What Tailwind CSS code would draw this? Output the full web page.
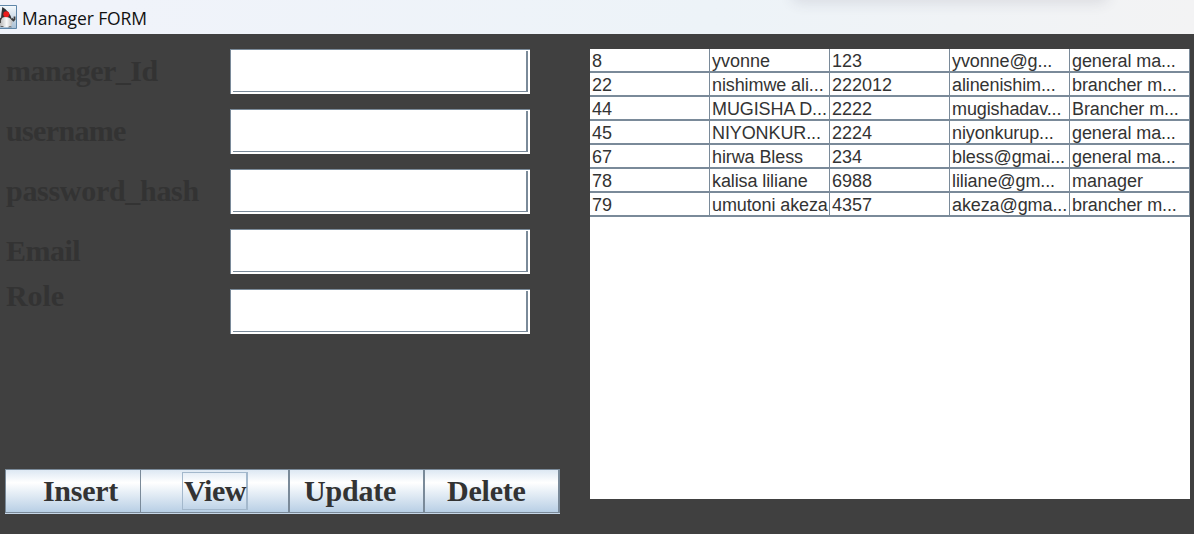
<!DOCTYPE html>
<html lang="en">
<head>
<meta charset="utf-8">
<title>Manager FORM</title>
<script src="https://cdn.jsdelivr.net/npm/@tailwindcss/browser@4"></script>
</head>
<body class="w-[1194px] h-[534px] overflow-hidden bg-[#404040] text-[#333333]">
<header class="relative flex h-[34px] items-center overflow-hidden bg-linear-to-r from-[#f0f3fa] from-10% via-[#edf3f8] via-60% to-[#f3f3f4]">
  <svg class="h-[24px] w-[17px] shrink-0" viewBox="0 0 17 24">
    <defs>
      <linearGradient id="sky" x1="0" y1="0" x2="0" y2="1"><stop offset="0" stop-color="#f6fafd"/><stop offset="1" stop-color="#a9bfd4"/></linearGradient>
      <linearGradient id="belly" x1="0" y1="0" x2="1" y2="0"><stop offset="0" stop-color="#b4b4b4"/><stop offset=".55" stop-color="#fafafa"/><stop offset="1" stop-color="#bcbcbc"/></linearGradient>
    </defs>
    <path d="M-1 .5H16.500V23.500H-1Z" fill="url(#sky)" stroke="#5f86a8"/>
    <path d="M1 13Q-1 16 0 21L3 22H10Q13.500 20 12 13L9 9H3Z" fill="url(#belly)"/>
    <path d="M2.300 2Q5.500 3.500 8.500 7.500Q11.300 11 11.600 14.500Q9 11.500 6 12Q3 11.500 1 14Q1.300 8 2.300 2Z" fill="#303235"/>
    <path d="M1 13L0 15.500V18M11.500 13.500L13.500 15.500L14.500 14.500V11.500" fill="none" stroke="#3d3d3d" stroke-width="1.800"/>
    <path d="M0 22Q2 20 4 22ZM8 22.300Q10 20.300 12 22.300Z" fill="#555"/>
    <circle cx="6.300" cy="9.300" r="3" fill="#ea1c1c"/>
  </svg>
  <h1 class="pl-[5px] pt-[2px] font-['Open_Sans',sans-serif] text-[17.5px] leading-[34px] tracking-[-0.1px] text-[#111111]">Manager FORM</h1>
  <div class="absolute left-[795px] top-[-11px] h-[10px] w-[310px] rounded-full shadow-[0_0_14px_4px_rgba(60,60,80,0.12)]"></div>
</header>

<main class="flex h-[500px] pt-[15px]">
  <section class="flex w-[590px] flex-col">
    <div class="flex h-[420px]">
      <div class="flex w-[230px] flex-col gap-[15px] pl-[6px] font-['Liberation_Serif',serif] text-[30px] font-bold leading-[43px]">
        <label class="h-[45px] tracking-[-0.5px]">manager_Id</label>
        <label class="h-[45px] tracking-[-0.65px]">username</label>
        <label class="h-[45px] tracking-[-0.3px]">password_hash</label>
        <label class="h-[45px] tracking-[-0.5px]">Email</label>
        <label class="-mt-[15px] h-[45px] tracking-[-0.1px]">Role</label>
      </div>
      <div class="flex w-[300px] flex-col gap-[15px]">
        <div class="h-[45px] border-l border-t border-[#7a8a99] bg-white pr-[2px] pl-[2px] pt-px"><div class="h-[41px] border-b border-r-2 border-[#7a8a99]"></div></div>
        <div class="h-[45px] border-l border-t border-[#7a8a99] bg-white pr-[2px] pl-[2px] pt-px"><div class="h-[41px] border-b border-r-2 border-[#7a8a99]"></div></div>
        <div class="h-[45px] border-l border-t border-[#7a8a99] bg-white pr-[2px] pl-[2px] pt-px"><div class="h-[41px] border-b border-r-2 border-[#7a8a99]"></div></div>
        <div class="h-[45px] border-l border-t border-[#7a8a99] bg-white pr-[2px] pl-[2px] pt-px"><div class="h-[41px] border-b border-r-2 border-[#7a8a99]"></div></div>
        <div class="h-[45px] border-l border-t border-[#7a8a99] bg-white pr-[2px] pl-[2px] pt-px"><div class="h-[41px] border-b border-r-2 border-[#7a8a99]"></div></div>
      </div>
    </div>
    <div class="ml-[5px] h-[45px] w-[555px] border-b border-[#c6d7e8]">
      <div class="flex h-[44px] border-y border-l border-[#7a8a99] bg-linear-to-b from-[#dde8f3] via-white via-30% to-[#b8cfe5] font-['Liberation_Serif',serif] text-[30px] font-bold leading-[41px]">
        <button class="flex w-[135px] border-r border-[#7a8a99] pl-[37px] tracking-[-0.3px]">Insert</button>
        <button class="flex w-[149px] border-r-2 border-[#7a8a99] pl-[41px] pt-[2px]"><span class="flex h-[38px] w-[66px] border border-r-2 border-[#a3b8cc] pl-px leading-[35px] tracking-[-0.5px]">View</span></button>
        <button class="flex w-[135px] border-r-2 border-[#7a8a99] pl-[14px] tracking-[-0.2px]">Update</button>
        <button class="flex w-[135px] border-r-2 border-[#7a8a99] pl-[22px] tracking-[-0.2px]">Delete</button>
      </div>
    </div>
  </section>

  <section class="h-[450px] w-[600px] bg-white font-['Liberation_Sans',sans-serif] text-[18px] leading-[24px]">
    <div id="rows" class="grid grid-cols-5"></div>
  </section>
</main>
<script>
const data = [
  ["8","yvonne","123","yvonne@g...","general ma..."],
  ["22","nishimwe ali...","222012","alinenishim...","brancher m..."],
  ["44","MUGISHA D...","2222","mugishadav...","Brancher m..."],
  ["45","NIYONKUR...","2224","niyonkurup...","general ma..."],
  ["67","hirwa Bless","234","bless@gmai...","general ma..."],
  ["78","kalisa liliane","6988","liliane@gm...","manager"],
  ["79","umutoni akeza","4357","akeza@gma...","brancher m..."]
];
const rows = document.getElementById("rows");
for (const text of data.flat()) {
  const cell = document.createElement("div");
  cell.className = "h-[24px] whitespace-nowrap border-r border-b-2 border-[#7a8a99] pl-[2px]";
  if (text.length > 9) cell.classList.add("tracking-[-0.1px]");
  cell.textContent = text;
  rows.append(cell);
}
</script>
</body>
</html>
